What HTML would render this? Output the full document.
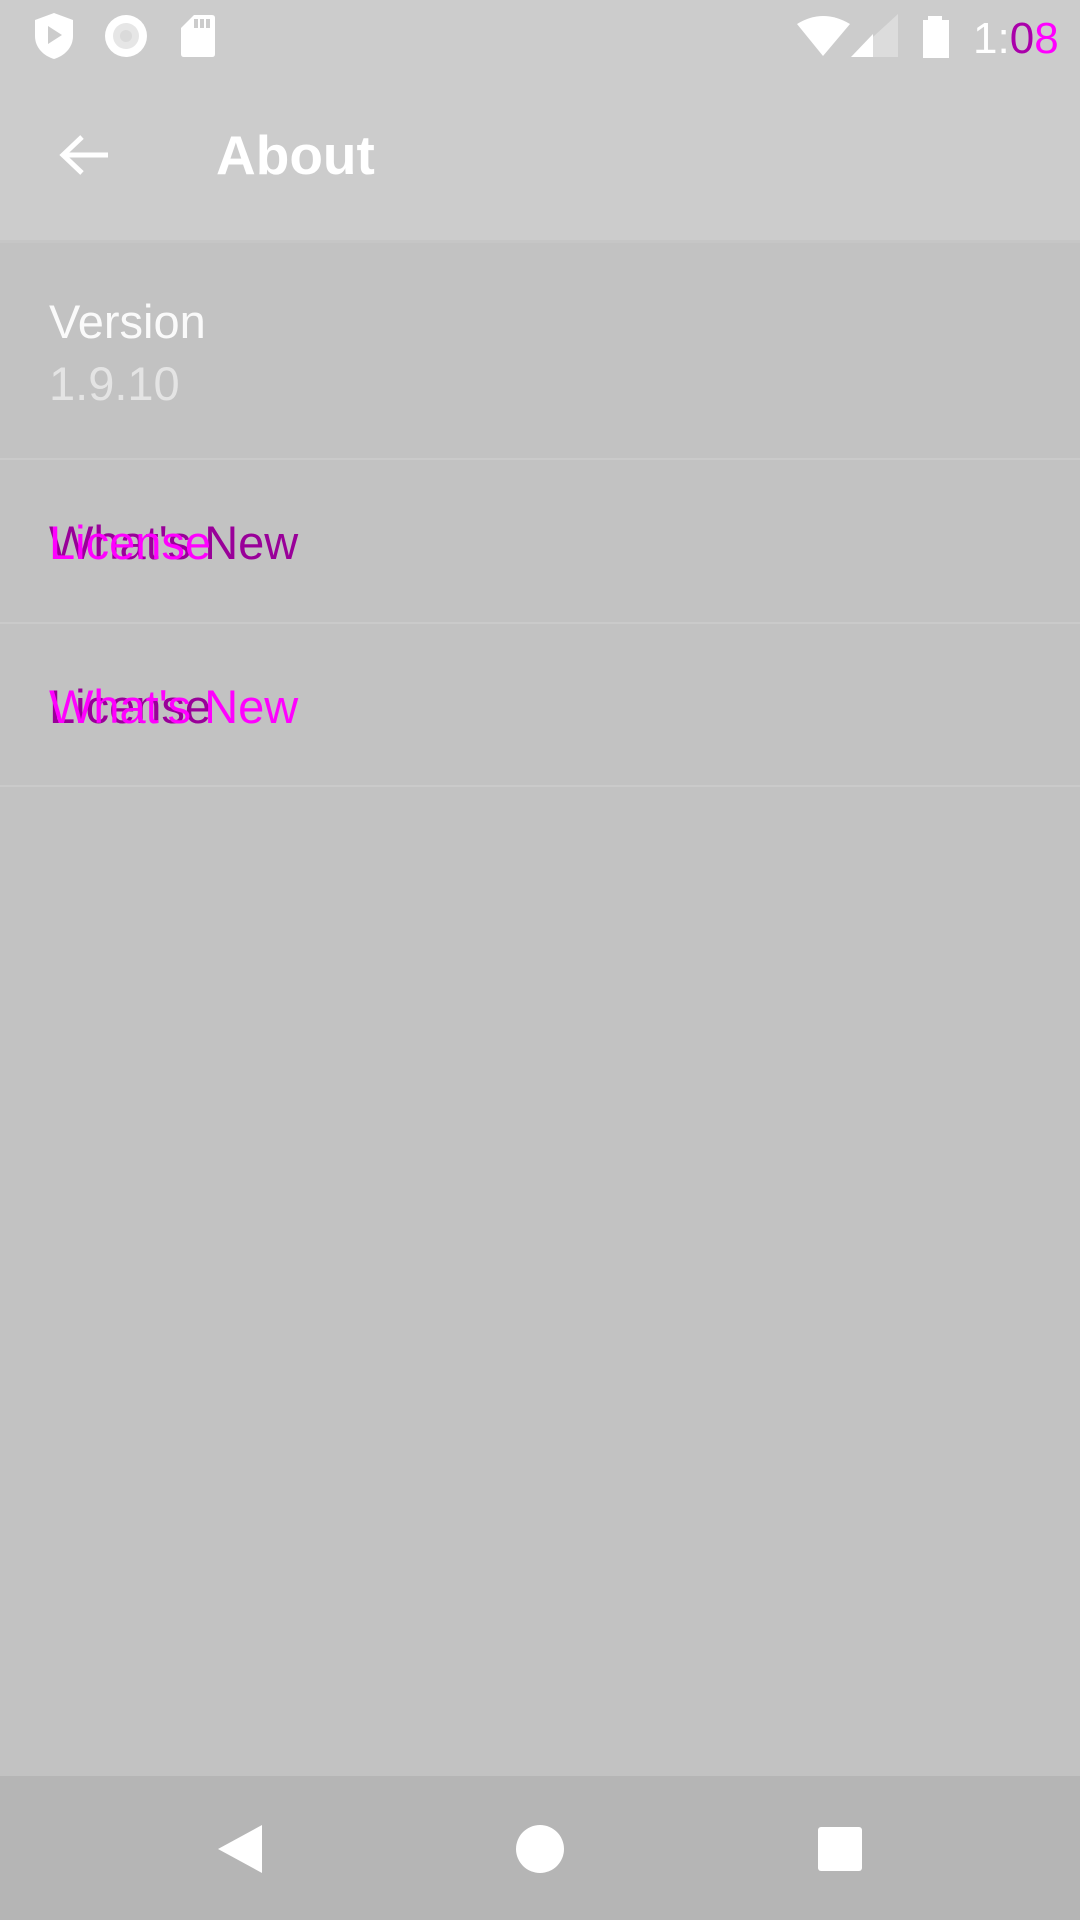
<!DOCTYPE html>
<html><head><meta charset="utf-8"><style>
body{margin:0;width:1080px;height:1920px;background:#c2c2c2;font-family:"Liberation Sans",sans-serif;position:relative;overflow:hidden}
.a{position:absolute}
.t{position:absolute;left:49px;font-size:47px;line-height:1;white-space:nowrap}
.div{position:absolute;left:0;width:1080px;height:2px;background:#cacaca}
</style></head><body>
<div class="a" style="left:0;top:0;width:1080px;height:240px;background:#cccccc"></div>
<div class="a" style="left:0;top:240px;width:1080px;height:3px;background:#c6c6c6"></div>
<svg class="a" style="left:30px;top:10px" width="200" height="52" viewBox="0 0 200 52">
<path d="M24 3 L43 10 V26 C43 38 34 46 24 49 C14 46 5 38 5 26 V10 Z" fill="#fff"/>
<path d="M18 16 L32 25 L18 34 Z" fill="#cccccc"/>
<circle cx="96" cy="26" r="21" fill="#fff"/><circle cx="96" cy="26" r="13" fill="#e6e6e6"/><circle cx="96" cy="26" r="6" fill="#dadada"/>
<path d="M164 5 H182 Q185 5 185 8 V44 Q185 47 182 47 H154 Q151 47 151 44 V18 Z" fill="#fff"/>
<rect x="164" y="9" width="4" height="9" fill="#ccc"/><rect x="170" y="9" width="4" height="9" fill="#ccc"/><rect x="176" y="9" width="4" height="9" fill="#ccc"/>
</svg>
<svg class="a" style="left:795px;top:12px" width="180" height="50" viewBox="0 0 180 50">
<path d="M2 12 Q28 -4 55 12 L28 44 Z" fill="#fff"/>
<path d="M103 2 V45 H56 Z" fill="#dcdcdc"/><path d="M78 22 V45 H56 Z" fill="#fff"/>
<rect x="133" y="4" width="14" height="6" fill="#fff"/><rect x="128" y="8" width="26" height="38" fill="#fff"/>
</svg>
<div class="a" style="left:973px;top:17px;font-size:44px;color:#fff;line-height:1">1:<span style="color:#aa00aa">0</span><span style="color:#ff00ff">8</span></div>
<svg class="a" style="left:56px;top:130px" width="56" height="52" viewBox="0 0 56 52">
<path d="M52 25 H8 M26 7 L7 25 L26 43" stroke="#fff" stroke-width="5" fill="none"/>
</svg>
<div class="a" style="left:216px;top:128px;font-size:55px;font-weight:bold;color:#fff;line-height:1">About</div>
<div class="t" style="top:298px;color:#fafafa">Version</div>
<div class="t" style="top:360px;color:#e4e4e4">1.9.10</div>
<div class="div" style="top:458px"></div>
<div class="t" style="top:519px;color:#990099">What's New</div>
<div class="t" style="top:519px;color:#ff00ff">License</div>
<div class="div" style="top:622px"></div>
<div class="t" style="top:683px;color:#990099">License</div>
<div class="t" style="top:683px;color:#ff00ff">What's New</div>
<div class="div" style="top:785px"></div>
<div class="a" style="left:0;top:1776px;width:1080px;height:144px;background:#b5b5b5"></div>
<svg class="a" style="left:0;top:1776px" width="1080" height="144" viewBox="0 0 1080 144">
<path d="M262 49 V97 L218 73 Z" fill="#fff"/>
<circle cx="540" cy="73" r="24" fill="#fff"/>
<rect x="818" y="51" width="44" height="44" rx="3" fill="#fff"/>
</svg>
</body></html>
